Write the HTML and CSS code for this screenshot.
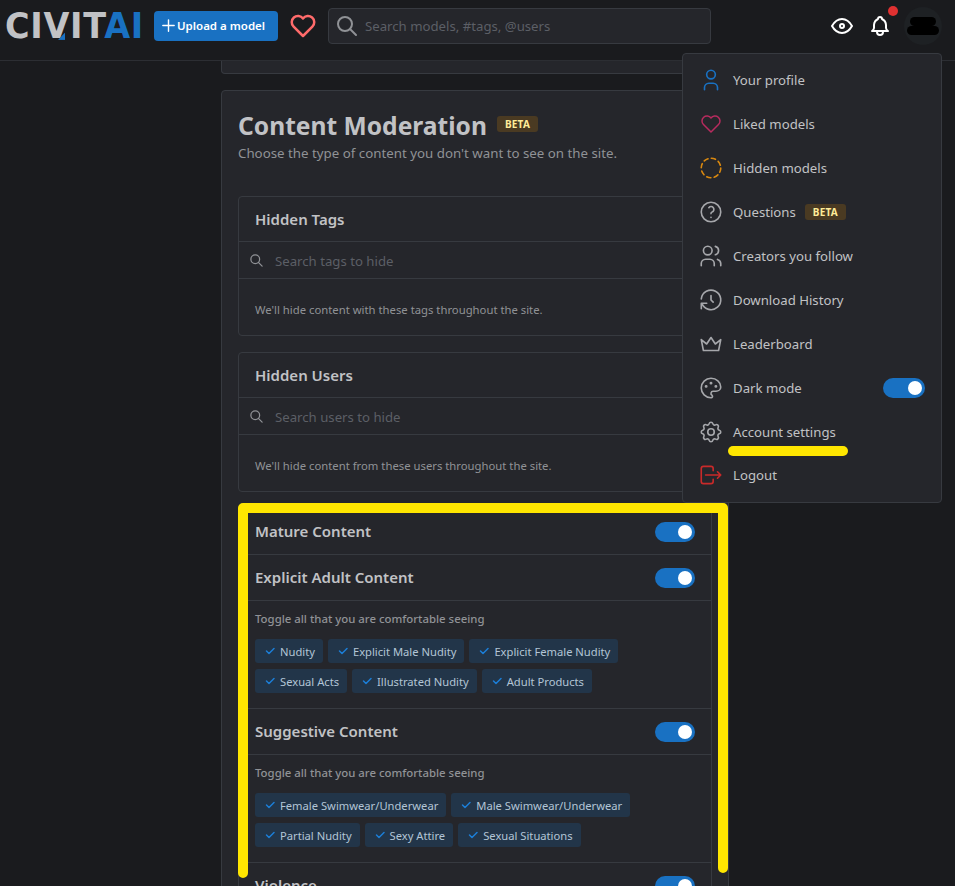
FILE: index.html
```html
<!DOCTYPE html>
<html lang="en">
<head>
    <meta charset="UTF-8">
    <title>Content Moderation</title>
    <link rel="stylesheet" href="styles.css">
</head>
<body>
    <svg class="sprite">
        <symbol id="i-search" viewBox="0 0 24 24"><circle cx="10" cy="10" r="7"/><path d="M21 21l-6 -6"/></symbol>
        <symbol id="i-heart" viewBox="0 0 24 24"><path d="M19.5 12.572l-7.5 7.428l-7.5 -7.428a5 5 0 1 1 7.5 -6.566a5 5 0 1 1 7.5 6.572"/></symbol>
        <symbol id="i-check" viewBox="0 0 24 24"><path d="M5 12l5 5l10 -10"/></symbol>
    </svg>

    <header class="topbar">
        <a class="logo"><span class="logo-civit">CIVIT</span><span class="logo-ai">AI</span><i class="logo-notch"></i></a>
        <a class="upload-btn">
            <svg class="upload-plus" viewBox="0 0 24 24"><path d="M12 4v16M4 12h16"/></svg>
            Upload a model
        </a>
        <svg class="top-heart"><use href="#i-heart"/></svg>
        <div class="top-search">
            <svg class="top-search-icon"><use href="#i-search"/></svg>
            <span>Search models, #tags, @users</span>
        </div>
        <div class="top-right">
            <svg class="top-icon" viewBox="0 0 24 24"><circle cx="12" cy="12" r="2"/><path d="M22 12c-2.667 4.667 -6 7 -10 7s-7.333 -2.333 -10 -7c2.667 -4.667 6 -7 10 -7s7.333 2.333 10 7"/></svg>
            <div class="bell">
                <svg class="top-icon" viewBox="0 0 24 24"><path d="M10 5a2 2 0 0 1 4 0a7 7 0 0 1 4 6v3a4 4 0 0 0 2 3h-16a4 4 0 0 0 2 -3v-3a7 7 0 0 1 4 -6"/><path d="M9 17v1a3 3 0 0 0 6 0v-1"/></svg>
                <i class="bell-dot"></i>
            </div>
            <div class="avatar"><i class="blot blot-a"></i><i class="blot blot-b"></i></div>
        </div>
    </header>

    <main class="page">
        <div class="prev-card"></div>
        <section class="card">
            <h1 class="card-title">Content Moderation <span class="beta">BETA</span></h1>
            <p class="card-sub">Choose the type of content you don't want to see on the site.</p>

            <div class="box box-first">
                <div class="box-head">Hidden Tags</div>
                <div class="box-search"><svg class="box-search-icon"><use href="#i-search"/></svg>Search tags to hide</div>
                <div class="box-note">We'll hide content with these tags throughout the site.</div>
            </div>

            <div class="box">
                <div class="box-head">Hidden Users</div>
                <div class="box-search"><svg class="box-search-icon"><use href="#i-search"/></svg>Search users to hide</div>
                <div class="box-note">We'll hide content from these users throughout the site.</div>
            </div>

            <div class="box box-toggles">
                <div class="toggle-row"><span>Mature Content</span><i class="switch"></i></div>

                <div class="toggle-row"><span>Explicit Adult Content</span><i class="switch"></i></div>
                <div class="chips-panel">
                    <p class="chips-label">Toggle all that you are comfortable seeing</p>
                    <div class="chips">
                        <span class="chip"><svg><use href="#i-check"/></svg>Nudity</span>
                        <span class="chip"><svg><use href="#i-check"/></svg>Explicit Male Nudity</span>
                        <span class="chip"><svg><use href="#i-check"/></svg>Explicit Female Nudity</span>
                        <span class="chip"><svg><use href="#i-check"/></svg>Sexual Acts</span>
                        <span class="chip"><svg><use href="#i-check"/></svg>Illustrated Nudity</span>
                        <span class="chip"><svg><use href="#i-check"/></svg>Adult Products</span>
                    </div>
                </div>

                <div class="toggle-row"><span>Suggestive Content</span><i class="switch"></i></div>
                <div class="chips-panel">
                    <p class="chips-label">Toggle all that you are comfortable seeing</p>
                    <div class="chips">
                        <span class="chip"><svg><use href="#i-check"/></svg>Female Swimwear/Underwear</span>
                        <span class="chip"><svg><use href="#i-check"/></svg>Male Swimwear/Underwear</span>
                        <span class="chip"><svg><use href="#i-check"/></svg>Partial Nudity</span>
                        <span class="chip"><svg><use href="#i-check"/></svg>Sexy Attire</span>
                        <span class="chip"><svg><use href="#i-check"/></svg>Sexual Situations</span>
                    </div>
                </div>

                <div class="toggle-row"><span>Violence</span><i class="switch"></i></div>
            </div>
        </section>
    </main>

    <nav class="menu">
        <a class="menu-item">
            <svg class="ico ico-blue" viewBox="0 0 24 24"><circle cx="12" cy="7" r="4"/><path d="M6 21v-2a4 4 0 0 1 4 -4h4a4 4 0 0 1 4 4v2"/></svg>
            Your profile
        </a>
        <a class="menu-item">
            <svg class="ico ico-pink"><use href="#i-heart"/></svg>
            Liked models
        </a>
        <a class="menu-item">
            <svg class="ico ico-orange" viewBox="0 0 24 24"><circle class="dashed" cx="12" cy="12" r="9"/></svg>
            Hidden models
        </a>
        <a class="menu-item">
            <svg class="ico" viewBox="0 0 24 24"><circle cx="12" cy="12" r="9"/><path d="M12 17v.01"/><path d="M12 13.5a1.5 1.5 0 0 1 1 -1.5a2.6 2.6 0 1 0 -3 -4"/></svg>
            Questions <span class="beta beta-menu">BETA</span>
        </a>
        <a class="menu-item">
            <svg class="ico" viewBox="0 0 24 24"><circle cx="9" cy="7" r="4"/><path d="M3 21v-2a4 4 0 0 1 4 -4h4a4 4 0 0 1 4 4v2"/><path d="M16 3.13a4 4 0 0 1 0 7.75"/><path d="M21 21v-2a4 4 0 0 0 -3 -3.85"/></svg>
            Creators you follow
        </a>
        <a class="menu-item">
            <svg class="ico" viewBox="0 0 24 24"><path d="M12 8v4l2 2"/><path d="M3.05 11a9 9 0 1 1 .5 4m-.5 5v-5h5"/></svg>
            Download History
        </a>
        <a class="menu-item">
            <svg class="ico" viewBox="0 0 24 24"><path d="M12 6l4 6l5 -4l-2 10h-14l-2 -10l5 4z"/></svg>
            Leaderboard
        </a>
        <a class="menu-item menu-item-dark">
            <svg class="ico" viewBox="0 0 24 24"><path d="M12 21a9 9 0 1 1 0 -18a9 8 0 0 1 9 8a4.5 4 0 0 1 -4.5 4h-2.5a2 2 0 0 0 -1 3.75a1.3 1.3 0 0 1 -1 2.25"/><circle cx="7.5" cy="10.5" r=".6"/><circle cx="12" cy="7.5" r=".6"/><circle cx="16.5" cy="10.5" r=".6"/></svg>
            Dark mode
            <i class="switch switch-menu"></i>
        </a>
        <a class="menu-item menu-item-settings">
            <svg class="ico" viewBox="0 0 24 24"><path d="M10.325 4.317c.426 -1.756 2.924 -1.756 3.35 0a1.724 1.724 0 0 0 2.573 1.066c1.543 -.94 3.31 .826 2.37 2.37a1.724 1.724 0 0 0 1.065 2.572c1.756 .426 1.756 2.924 0 3.35a1.724 1.724 0 0 0 -1.066 2.573c.94 1.543 -.826 3.31 -2.37 2.37a1.724 1.724 0 0 0 -2.572 1.065c-.426 1.756 -2.924 1.756 -3.35 0a1.724 1.724 0 0 0 -2.573 -1.066c-1.543 .94 -3.31 -.826 -2.37 -2.37a1.724 1.724 0 0 0 -1.065 -2.572c-1.756 -.426 -1.756 -2.924 0 -3.35a1.724 1.724 0 0 0 1.066 -2.573c-.94 -1.543 .826 -3.31 2.37 -2.37c1 .608 2.296 .07 2.572 -1.065z"/><circle cx="12" cy="12" r="3"/></svg>
            Account settings
        </a>
        <a class="menu-item menu-item-logout">
            <svg class="ico ico-red" viewBox="0 0 24 24"><path d="M14 8v-2a2 2 0 0 0 -2 -2h-7a2 2 0 0 0 -2 2v12a2 2 0 0 0 2 2h7a2 2 0 0 0 2 -2v-2"/><path d="M7 12h14l-3 -3m0 6l3 -3"/></svg>
            Logout
        </a>
    </nav>

    <!-- yellow marks painted over the screenshot -->
    <svg class="marks" viewBox="0 0 955 886">
        <path d="M243 873V508H723V868"/>
        <path d="M733 451H843"/>
    </svg>
</body>
</html>
```

FILE: styles.css
```css
*{
    margin: 0;
    padding: 0;
    box-sizing: border-box;
}
html, body{
    height: 886px;
    overflow: hidden;
}
body{
    position: relative;
    background-color: #1a1b1e;
    color: #c1c2c5;
    font-family: "Noto Sans", "Liberation Sans", sans-serif;
    font-size: 13.2px;
}
svg{
    fill: none;
    stroke: currentColor;
    stroke-width: 2;
    stroke-linecap: round;
    stroke-linejoin: round;
    flex: none;
}
.sprite{
    display: none;
}

/* top bar */
.topbar{
    height: 61px;
    padding: 0 13px 1px 5px;
    border-bottom: 1px solid #2c2e33;
    display: flex;
    align-items: center;
    gap: 12px;
}
.logo{
    position: relative;
    width: 137px;
    font-family: "DejaVu Sans", sans-serif;
    font-weight: 700;
    font-size: 33.5px;
    line-height: 36px;
    letter-spacing: .7px;
    white-space: nowrap;
    margin-top: -8px;
    transform: scaleY(1.07);
}
.logo-civit{
    color: #c1c2c5;
}
.logo-ai{
    color: #1971c2;
}
.logo-notch{
    position: absolute;
    left: 53px;
    top: 24px;
    width: 7px;
    height: 7px;
    background-color: #1971c2;
    clip-path: polygon(100% 0, 100% 100%, 0 100%);
}
.upload-btn{
    width: 124px;
    height: 30px;
    margin-top: -8px;
    padding-left: 6px;
    background-color: #1971c2;
    border-radius: 4px;
    color: #fff;
    font-weight: 600;
    font-size: 11.5px;
    display: flex;
    align-items: center;
}
.upload-plus{
    width: 17px;
    height: 17px;
}
.top-heart{
    width: 30px;
    height: 30px;
    color: #ff6b6b;
    margin: -8px -2px 0;
}
.top-search{
    width: 383px;
    height: 36px;
    margin-top: -8px;
    background-color: #25262b;
    border: 1px solid #373a40;
    border-radius: 4px;
    color: #5c5f66;
    display: flex;
    align-items: center;
    gap: 6px;
    padding-left: 6px;
}
.top-search-icon{
    width: 24px;
    height: 24px;
    color: #909296;
}
.top-right{
    margin-left: auto;
    margin-top: -8px;
    display: flex;
    align-items: center;
    gap: 14px;
    margin-right: 1px;
    color: #fff;
}
.top-icon{
    width: 24px;
    height: 24px;
    display: block;
}
.bell{
    position: relative;
}
.bell-dot{
    position: absolute;
    top: -8px;
    right: -6px;
    width: 10px;
    height: 10px;
    border-radius: 50%;
    background-color: #e03131;
}
.avatar{
    width: 38px;
    height: 38px;
    margin-left: -2px;
    margin-right: -1px;
    border-radius: 50%;
    background-color: #1e2124;
    display: flex;
    flex-direction: column;
    align-items: center;
    justify-content: center;
}
.blot{
    display: block;
    height: 9px;
    background-color: #000;
    border-radius: 5px;
}
.blot-a{
    width: 26px;
}
.blot-b{
    width: 32px;
}

/* page column */
.page{
    width: 508px;
    margin-left: 221px;
}
.prev-card{
    height: 13px;
    background-color: #25262b;
    border: 1px solid #373a40;
    border-top: 0;
    border-radius: 0 0 4px 4px;
    margin-bottom: 16px;
}
.card{
    background-color: #25262b;
    border: 1px solid #373a40;
    border-radius: 4px;
    padding: 17px 16px 16px;
}
.card-title{
    font-size: 24.6px;
    line-height: 35px;
    font-weight: 700;
    color: #c1c2c5;
    display: flex;
    align-items: center;
    gap: 10px;
    white-space: nowrap;
}
.beta{
    background-color: #4a3a22;
    color: #ffec99;
    font-size: 10px;
    line-height: 16px;
    height: 16px;
    font-weight: 700;
    padding: 0 8px;
    border-radius: 3px;
    letter-spacing: .2px;
    margin-bottom: 4px;
}
.card-sub{
    color: #909296;
    font-size: 13.3px;
    line-height: 20px;
}

.box{
    border: 1px solid #373a40;
    border-radius: 4px;
    margin-bottom: 16px;
}
.box-first{
    margin-top: 33px;
}
.box-head{
    height: 45px;
    padding: 0 16px;
    font-size: 15px;
    font-weight: 600;
    line-height: 44px;
    border-bottom: 1px solid #373a40;
}
.box-search{
    height: 37px;
    padding: 2px 0 0 10px;
    color: #5c5f66;
    display: flex;
    align-items: center;
    gap: 11px;
    border-bottom: 1px solid #373a40;
}
.box-search-icon{
    width: 15px;
    height: 15px;
    margin-top: -2px;
    color: #909296;
}
.box-note{
    height: 56px;
    padding: 22px 16px 0;
    font-size: 11.3px;
    line-height: 18px;
    color: #909296;
}
.box-toggles{
    margin-bottom: 0;
}
.toggle-row{
    height: 46px;
    padding: 0 16px;
    display: flex;
    align-items: center;
    justify-content: space-between;
    font-size: 15px;
    font-weight: 600;
    border-bottom: 1px solid #373a40;
}
.toggle-row span{
    margin-top: -2px;
}
.switch{
    display: block;
    width: 40px;
    height: 20px;
    border-radius: 10px;
    background-color: #1971c2;
    padding: 3px 3px 3px 23px;
}
.switch::after{
    content: "";
    display: block;
    width: 14px;
    height: 14px;
    border-radius: 50%;
    background-color: #fff;
}
.switch-menu{
    width: 42px;
    padding-left: 25px;
    margin-left: auto;
}
.chips-panel{
    height: 108px;
    padding: 9px 16px 0;
    border-bottom: 1px solid #373a40;
}
.chips-label{
    font-size: 11.4px;
    line-height: 18px;
    font-weight: 500;
    color: #909296;
    margin-bottom: 11px;
}
.chips{
    display: flex;
    flex-wrap: wrap;
    gap: 6px 5px;
}
.chip{
    height: 24px;
    padding: 0 8px 0 9px;
    background-color: #223549;
    border-radius: 3px;
    font-size: 11.2px;
    color: #b3c5d6;
    display: flex;
    align-items: center;
    gap: 4px;
    white-space: nowrap;
}
.chip svg{
    width: 12px;
    height: 12px;
    color: #1c7ed6;
    stroke-width: 3;
}

/* user dropdown */
.menu{
    position: absolute;
    left: 682px;
    top: 53px;
    width: 260px;
    height: 450px;
    padding-top: 4px;
    background-color: #25262b;
    border: 1px solid #373a40;
    border-radius: 4px;
}
.menu-item{
    height: 44px;
    padding: 0 16px 0 18px;
    display: flex;
    align-items: center;
    gap: 12px;
    color: #c1c2c5;
    font-size: 13.2px;
}
.menu-item-dark{
    height: 43px;
}
.menu-item-settings{
    height: 45px;
}
.menu-item-logout{
    height: 42px;
}
.ico{
    width: 26px;
    height: 26px;
    margin: 0 -3px;
    stroke-width: 1.5;
    color: #a6a7ab;
}
.ico-blue{
    color: #1971c2;
}
.ico-pink{
    color: #b72b5e;
    width: 24px;
    height: 24px;
    margin: 0 -2px;
}
.ico-orange{
    color: #d9880f;
}
.ico-red{
    color: #c92a2a;
}
.dashed{
    stroke-dasharray: 4 3.07;
}
.beta-menu{
    margin: 0 0 0 -3px;
}

/* highlighter strokes */
.marks{
    position: absolute;
    left: 0;
    top: 0;
    width: 955px;
    height: 886px;
    color: #ffe600;
    stroke-width: 10;
    pointer-events: none;
}
```
